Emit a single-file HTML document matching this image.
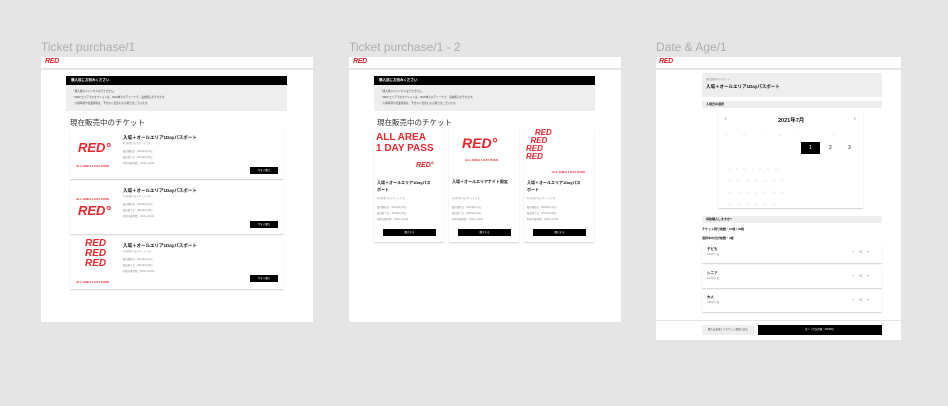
<!DOCTYPE html>
<html><head><meta charset="utf-8"><style>
*{margin:0;padding:0;box-sizing:border-box}
body{width:948px;height:406px;background:#e5e5e5;position:relative;overflow:hidden;font-family:"Liberation Sans","Noto Sans CJK JP",sans-serif;color:#111}
.a{position:absolute}
.w{background:#fff}
.t{font-size:12px;color:#adadad;white-space:nowrap}
.logo{font-size:7px;font-weight:bold;color:#e8262d;font-style:italic;letter-spacing:-0.3px}
.blk{background:#000;color:#fff;font-size:3.5px;font-weight:bold;padding-left:5px;line-height:9px}
.note{background:#eee;font-size:2.6px;color:#444;padding:4px 6px;line-height:6px}
.h{font-size:7.5px;color:#333;white-space:nowrap}
.card{background:#fff;box-shadow:0 1px 1px rgba(0,0,0,.18)}
.ct{font-size:4.5px;font-weight:bold;white-space:nowrap}
.sm{font-size:2.4px;color:#888;line-height:6px;white-space:nowrap}
.btn{background:#000;color:#fff;font-size:2.5px;text-align:center}
.red{color:#e8262d;font-weight:bold;font-style:italic}
.g{color:#e2e2e2}
</style></head><body>
<!-- Frame 1 -->
<div class="a t" style="left:41px;top:40px">Ticket purchase/1</div>
<div class="a w" style="left:41px;top:57px;width:272px;height:11px"><span class="a logo" style="left:4px;top:1px">RED</span></div>
<div class="a w" style="left:41px;top:70px;width:272px;height:252px"></div>
<div class="a blk" style="left:66px;top:76px;width:221px;height:9px">購入前にお読みください</div>
<div class="a note" style="left:66px;top:85px;width:221px;height:26px">・購入後のキャンセルはできません。<br>・RED°エリアでのオプションは、RED体でのアリーナで、追加購入ができます。<br>・入場時間や営業時間は、予告なく変更になる場合がございます。</div>
<div class="a h" style="left:70px;top:117px">現在販売中のチケット</div>

<div class="a card" style="left:70px;top:130px;width:213px;height:49px">
<div class="a red" style="left:8px;top:10px;font-size:13px">RED°</div><div class="a red" style="left:6px;top:34px;font-size:3px">ALL AREA 1 DAY PASS</div>
<div class="a ct" style="left:53px;top:5px">入場＋オールエリア1Dayパスポート</div>
<div class="a sm" style="left:53px;top:11px">1日中遊べるチケットです。</div>
<div class="a sm" style="left:53px;top:19px">販売開始日：2021年5月1日<br>販売終了日：2021年4月6日<br>利用可能時間：10:00〜19:00</div>
<div class="a btn" style="left:180px;top:37px;width:28px;height:7px;line-height:7px">今すぐ購入</div></div>

<div class="a card" style="left:70px;top:185px;width:213px;height:49px">
<div class="a red" style="left:6px;top:12px;font-size:3px">ALL AREA 1 DAY PASS</div><div class="a red" style="left:8px;top:18px;font-size:13px">RED°</div>
<div class="a ct" style="left:53px;top:3px">入場＋オールエリア1Dayパスポート</div>
<div class="a sm" style="left:53px;top:9px">1日中遊べるチケットです。</div>
<div class="a sm" style="left:53px;top:17px">販売開始日：2021年4月1日<br>販売終了日：2021年4月6日<br>利用可能時間：10:00〜19:00</div>
<div class="a btn" style="left:180px;top:36px;width:28px;height:7px;line-height:7px">今すぐ購入</div></div>

<div class="a card" style="left:70px;top:239px;width:213px;height:50px">
<div class="a red" style="left:15px;top:0px;font-size:10px;line-height:10px">RED<br>RED<br>RED</div><div class="a red" style="left:6px;top:41px;font-size:3px">ALL AREA 1 DAY PASS</div>
<div class="a ct" style="left:53px;top:4px">入場＋オールエリア1Dayパスポート</div>
<div class="a sm" style="left:53px;top:10px">1日中遊べるチケットです。</div>
<div class="a sm" style="left:53px;top:18px">販売開始日：2021年4月1日<br>販売終了日：2021年4月6日<br>利用可能時間：10:00〜19:00</div>
<div class="a btn" style="left:180px;top:36px;width:28px;height:7px;line-height:7px">今すぐ購入</div></div>

<!-- Frame 2 -->
<div class="a t" style="left:349px;top:40px">Ticket purchase/1 - 2</div>
<div class="a w" style="left:349px;top:57px;width:272px;height:11px"><span class="a logo" style="left:4px;top:1px">RED</span></div>
<div class="a w" style="left:349px;top:70px;width:272px;height:252px"></div>
<div class="a blk" style="left:374px;top:76px;width:221px;height:9px">購入前にお読みください</div>
<div class="a note" style="left:374px;top:85px;width:221px;height:26px">・購入後のキャンセルはできません。<br>・RED°エリアでのオプションは、RED体でのアリーナで、追加購入ができます。<br>・入場時間や営業時間は、予告なく変更になる場合がございます。</div>
<div class="a h" style="left:377px;top:117px">現在販売中のチケット</div>

<div class="a card" style="left:374px;top:129px;width:70px;height:113px">
<div class="a red" style="left:2px;top:3px;font-size:10px;line-height:11px;font-style:normal;white-space:nowrap">ALL AREA<br>1 DAY PASS</div>
<div class="a red" style="left:42px;top:33px;font-size:7px">RED°</div>
<div class="a ct" style="left:3px;top:50px;font-size:4px;line-height:7px">入場＋オールエリア1Dayパス<br>ポート</div>
<div class="a sm" style="left:3px;top:67px">1日中遊べるチケットです。</div>
<div class="a sm" style="left:3px;top:76px">販売開始日：2021年4月1日<br>販売終了日：2021年4月6日<br>利用可能時間：10:00〜19:00</div>
<div class="a btn" style="left:9px;top:100px;width:53px;height:7px;line-height:7px">購入する</div></div>

<div class="a card" style="left:449px;top:129px;width:70px;height:113px">
<div class="a red" style="left:13px;top:6px;font-size:14px">RED°</div>
<div class="a red" style="left:16px;top:29px;font-size:3px;font-style:normal">ALL AREA 1 DAY PASS</div>
<div class="a ct" style="left:3px;top:50px;font-size:4px">入場＋オールエリアナイト限定</div>
<div class="a sm" style="left:3px;top:67px">1日中遊べるチケットです。</div>
<div class="a sm" style="left:3px;top:76px">販売開始日：2021年4月1日<br>販売終了日：2021年4月6日<br>利用可能時間：10:00〜19:00</div>
<div class="a btn" style="left:9px;top:100px;width:53px;height:7px;line-height:7px">購入する</div></div>

<div class="a card" style="left:524px;top:129px;width:70px;height:113px">
<div class="a red" style="left:2px;top:0px;font-size:8px;line-height:8px">&nbsp;&nbsp;&nbsp;&nbsp;RED<br>&nbsp;&nbsp;RED<br>RED<br>RED</div>
<div class="a red" style="left:28px;top:41px;font-size:3px;font-style:normal">ALL AREA 1 DAY PASS</div>
<div class="a ct" style="left:3px;top:50px;font-size:4px;line-height:7px">入場＋オールエリア1Dayパス<br>ポート</div>
<div class="a sm" style="left:3px;top:67px">1日中遊べるチケットです。</div>
<div class="a sm" style="left:3px;top:76px">販売開始日：2021年4月1日<br>販売終了日：2021年4月6日<br>利用可能時間：10:00〜19:00</div>
<div class="a btn" style="left:9px;top:100px;width:53px;height:7px;line-height:7px">購入する</div></div>

<!-- Frame 3 -->
<div class="a t" style="left:656px;top:40px">Date &amp; Age/1</div>
<div class="a w" style="left:656px;top:57px;width:245px;height:11px"><span class="a logo" style="left:3px;top:1px">RED</span></div>
<div class="a w" style="left:656px;top:70px;width:245px;height:270px"></div>
<div class="a" style="left:702px;top:73px;width:180px;height:24px;background:#eee"><div class="a sm" style="left:4px;top:4px">現在選択中のチケット：</div><div class="a ct" style="left:4px;top:11px;font-size:4.5px">入場＋オールエリア1Dayパスポート</div></div>
<div class="a" style="left:702px;top:101px;width:180px;height:7px;background:#eee;font-size:3px;font-weight:bold;padding-left:4px;line-height:7px">入場日の選択</div>
<div class="a card" style="left:718px;top:111px;width:145px;height:97px">
<div class="a" style="left:7px;top:5px;font-size:5px">‹</div><div class="a" style="left:136px;top:5px;font-size:5px">›</div>
<div class="a" style="left:60px;top:5px;font-size:5.5px;font-weight:bold">2021年7月</div>
<div class="a btn" style="left:83px;top:31px;width:19px;height:12px"></div>
<div class="a" style="left:91px;top:34px;font-size:5px;color:#fff">1</div>
<div class="a" style="left:111px;top:34px;font-size:5px">2</div>
<div class="a" style="left:130px;top:34px;font-size:5px">3</div>
<div class="a g" style="left:7px;top:22px;font-size:3px;word-spacing:15px;white-space:nowrap">S M T W T F S</div>
<div class="a g" style="left:10px;top:52px;font-size:3.5px;line-height:12px;white-space:pre">4      5      6      7      8      9      10
11     12     13     14     15     16     17
18     19     20     21     22     23     24
25     26     27     28     29     30</div>
</div>
<div class="a" style="left:702px;top:216px;width:180px;height:7px;background:#eee;font-size:3px;font-weight:bold;padding-left:4px;line-height:7px">何枚購入しますか?</div>
<div class="a" style="left:702px;top:227px;font-size:3px;font-weight:bold">チケット残り枚数：10枚 / 40枚</div>
<div class="a" style="left:702px;top:236px;font-size:3px;font-weight:bold">選択中の合計枚数：0枚</div>
<div class="a card" style="left:702px;top:243px;width:180px;height:20px"><div class="a ct" style="left:5px;top:4px;font-size:3.5px">子ども</div><div class="a sm" style="left:5px;top:9px">1000円 / 枚</div><div class="a" style="left:150px;top:6px;font-size:4px;color:#666;word-spacing:4px">− 0 +</div></div>
<div class="a card" style="left:702px;top:267px;width:180px;height:21px"><div class="a ct" style="left:5px;top:4px;font-size:3.5px">シニア</div><div class="a sm" style="left:5px;top:9px">1200円 / 枚</div><div class="a" style="left:150px;top:6px;font-size:4px;color:#666;word-spacing:4px">− 0 +</div></div>
<div class="a card" style="left:702px;top:291px;width:180px;height:21px"><div class="a ct" style="left:5px;top:4px;font-size:3.5px">大人</div><div class="a sm" style="left:5px;top:9px">1900円 / 枚</div><div class="a" style="left:150px;top:6px;font-size:4px;color:#666;word-spacing:4px">− 0 +</div></div>
<div class="a" style="left:656px;top:320px;width:245px;height:1px;background:#e5e5e5"></div>
<div class="a" style="left:702px;top:325px;width:52px;height:10px;background:#eee;font-size:2.5px;text-align:center;line-height:10px;color:#444">購入を変更してチケット選択に戻る</div>
<div class="a btn" style="left:758px;top:325px;width:124px;height:10px;line-height:10px">次へ（合計金額：0000円）</div>
</body></html>
